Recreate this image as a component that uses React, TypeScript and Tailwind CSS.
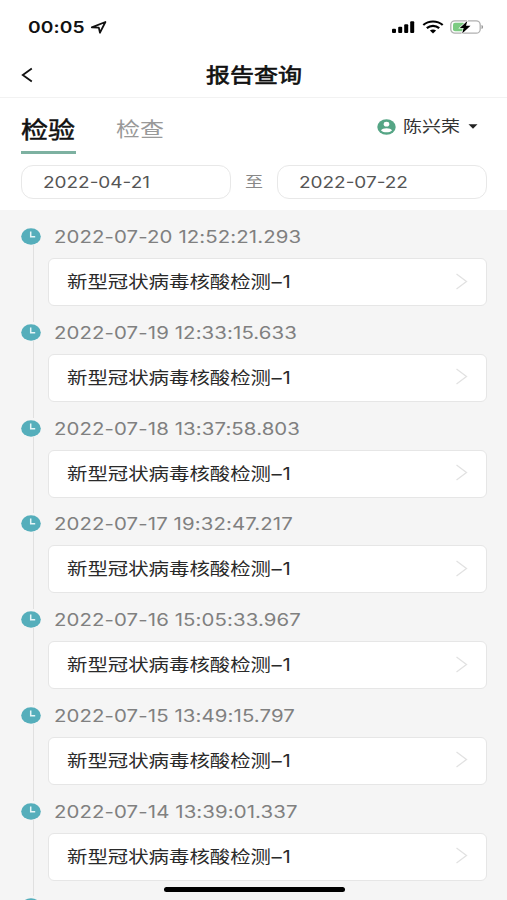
import type { ReactNode } from 'react';

interface Report {
    time: string;
    name: string;
}

const REPORTS: Report[] = [
    { time: '2022-07-20 12:52:21.293', name: '新型冠状病毒核酸检测' },
    { time: '2022-07-19 12:33:15.633', name: '新型冠状病毒核酸检测' },
    { time: '2022-07-18 13:37:58.803', name: '新型冠状病毒核酸检测' },
    { time: '2022-07-17 19:32:47.217', name: '新型冠状病毒核酸检测' },
    { time: '2022-07-16 15:05:33.967', name: '新型冠状病毒核酸检测' },
    { time: '2022-07-15 13:49:15.797', name: '新型冠状病毒核酸检测' },
    { time: '2022-07-14 13:39:01.337', name: '新型冠状病毒核酸检测' },
];

// Extended-width text, anchored at its left edge
const Wide = ({ className = '', children }: { className?: string; children: ReactNode }) => (
    <span className={`inline-block origin-left scale-x-[1.2] whitespace-nowrap ${className}`}>{children}</span>
);

const StatusBar = () => (
    <div className="flex h-[54px] shrink-0 items-center justify-between pl-7 pr-[23px]">
        <div className="flex items-center">
            <Wide className="w-[62px] text-base font-semibold leading-6 tracking-[0.1px]">00:05</Wide>
            <svg className="h-[15px] w-[17px]" viewBox="0 0 17 15" fill="none" stroke="#111" strokeWidth="1.8" strokeLinejoin="round">
                <path d="M1.8 7.3 L15.4 2 L10 12.7 L8.8 7.6 Z" />
            </svg>
        </div>
        <div className="flex items-center">
            <svg className="h-[14px] w-6" viewBox="0 0 24 14" fill="#000">
                <rect x="1" y="8.8" width="4" height="4.2" rx="1" />
                <rect x="7.2" y="6.8" width="4" height="6.2" rx="1" />
                <rect x="13.2" y="4.3" width="4" height="8.7" rx="1" />
                <rect x="19.2" y="1.3" width="4" height="11.7" rx="1" />
            </svg>
            <svg className="ml-[7px] h-[14px] w-[22px]" viewBox="0 0 22 14" fill="none" stroke="#000">
                <path d="M1.3 5 C6.6 0.3 15.4 0.3 20.7 5" strokeWidth="2.2" />
                <path d="M4.8 8.1 C8.3 5 13.7 5 17.2 8.1" strokeWidth="2.2" />
                <path d="M7.9 10.6 C9.7 9.1 12.3 9.1 14.1 10.6 L11 13.4 Z" fill="#000" stroke="none" />
            </svg>
            <svg className="ml-[6px] h-4 w-[34px]" viewBox="0 0 34 16" fill="none">
                <rect x="0.8" y="1.8" width="29.4" height="12.4" rx="4" stroke="#b0b0b0" strokeWidth="1.3" />
                <rect x="3" y="3.8" width="12" height="8.4" rx="2" fill="#7ccb82" />
                <path d="M31.5 6 C33.6 6.6 33.6 9.4 31.5 10 Z" fill="#999" />
                <path d="M17.3 2 L9.8 9 H13.6 L12.2 14.4 L20.5 6.8 H16 Z" fill="#000" stroke="#fff" strokeWidth="1.2" paintOrder="stroke" />
            </svg>
        </div>
    </div>
);

const NavBar = () => (
    <div className="grid h-11 shrink-0 grid-cols-[60px_1fr_60px] items-center border-b border-[#f2f2f2]">
        <svg className="mb-[2px] ml-[21px] h-4 w-3" viewBox="0 0 12 16" fill="none" stroke="#111" strokeWidth="1.8">
            <path d="M10.8 1.6 L1.8 8 L10.8 14.4" />
        </svg>
        <h1 className="flex justify-center text-xl leading-6 text-[#111] [-webkit-text-stroke:0.6px]">
            <span className="scale-x-[1.2]">报告查询</span>
        </h1>
    </div>
);

const Tabs = () => (
    <div className="flex h-14 shrink-0 justify-between pl-[21px] pr-[29px]">
        <div className="flex">
            <div className="flex w-[55px] flex-col justify-end border-b-[3px] border-[#7db1a1] pb-[5px]">
                <Wide className="w-0 text-[22.5px] leading-8 text-[#111] [-webkit-text-stroke:0.5px]">检验</Wide>
            </div>
            <div className="ml-10 pt-[17px]">
                <Wide className="text-xl leading-[30px] text-[#999]">检查</Wide>
            </div>
        </div>
        <div className="flex h-[57px] items-center">
            <svg className="h-4 w-[19px]" viewBox="0 0 19 16">
                <ellipse cx="9.5" cy="8" rx="9.2" ry="7.8" fill="#55a585" />
                <ellipse cx="9.5" cy="5.2" rx="2.8" ry="2.4" fill="#fff" />
                <path d="M4 11.4 C5.2 8.6 13.8 8.6 15 11.4 C12.5 14 6.5 14 4 11.4 Z" fill="#fff" />
            </svg>
            <Wide className="ml-[7px] w-[65px] text-[15.8px] leading-6 text-[#333]">陈兴荣</Wide>
            <svg className="h-[5px] w-[10px]" viewBox="0 0 10 5">
                <path d="M0.5 0.3 H9.5 L5 4.8 Z" fill="#222" />
            </svg>
        </div>
    </div>
);

const DateField = ({ value }: { value: string }) => (
    <div className="flex h-[34px] w-[210px] items-center rounded-[12px] border-[1.5px] border-[#e8e8e8] bg-white pl-[21px]">
        <Wide className="pt-px text-[15.8px] text-[#555]">{value}</Wide>
    </div>
);

const ClockDot = () => (
    <svg className="h-[17px] w-5 shrink-0" viewBox="0 0 20 17">
        <ellipse cx="10" cy="8.5" rx="9.8" ry="8.3" fill="#55aebb" />
        <path d="M9.7 3.6 V8.7 H14.2" fill="none" stroke="#e6f5f7" strokeWidth="1.5" />
    </svg>
);

const ReportItem = ({ report }: { report: Report }) => (
    <li className="flex h-[95.75px]">
        <div className="flex w-5 flex-col items-center pt-[2px]">
            <ClockDot />
            <div className="ml-1 w-px grow bg-[#e0e0e0]" />
        </div>
        <div className="ml-[7px] grow">
            <div className="flex h-5 pl-[6px]">
                <Wide className="text-[17px] leading-[22px] tracking-[0.08px] text-[#808080]">{report.time}</Wide>
            </div>
            <div className="mt-3 flex h-12 items-center justify-between rounded-md border border-[#e6e6e6] bg-white pl-[18px] pr-[18px]">
                <Wide className="text-[17px] leading-6 text-[#2a2a2a]">
                    {report.name}
                    <span className="ml-[0.5px] tracking-[0.6px]">–1</span>
                </Wide>
                <svg className="mb-[2px] h-[17px] w-3" viewBox="0 0 12 17" fill="none" stroke="#e2e2e2" strokeWidth="1.3">
                    <path d="M0.5 1 L10.5 8.5 L0.5 16" />
                </svg>
            </div>
        </div>
    </li>
);

export default function App() {
    return (
        <div className="relative flex h-[900px] w-[507px] flex-col overflow-hidden bg-white font-['Inter','Noto_Sans_CJK_SC',sans-serif] text-[#111]">
            <StatusBar />
            <NavBar />
            <Tabs />
            <div className="flex h-14 shrink-0 items-start justify-between pl-[21px] pr-5 pt-[11px]">
                <DateField value="2022-04-21" />
                <Wide className="w-[18px] text-[15px] leading-[34px] text-[#888]">至</Wide>
                <DateField value="2022-07-22" />
            </div>
            <ul className="min-h-0 grow overflow-hidden bg-[#f5f5f5] pl-[21px] pr-5 pt-4">
                {REPORTS.map((report) => (
                    <ReportItem key={report.time} report={report} />
                ))}
                <li className="pt-[2px]">
                    <ClockDot />
                </li>
            </ul>
            {/* Home indicator */}
            <div className="absolute bottom-2 left-[164px] h-[5px] w-[181px] rounded-full bg-black" />
        </div>
    );
}
